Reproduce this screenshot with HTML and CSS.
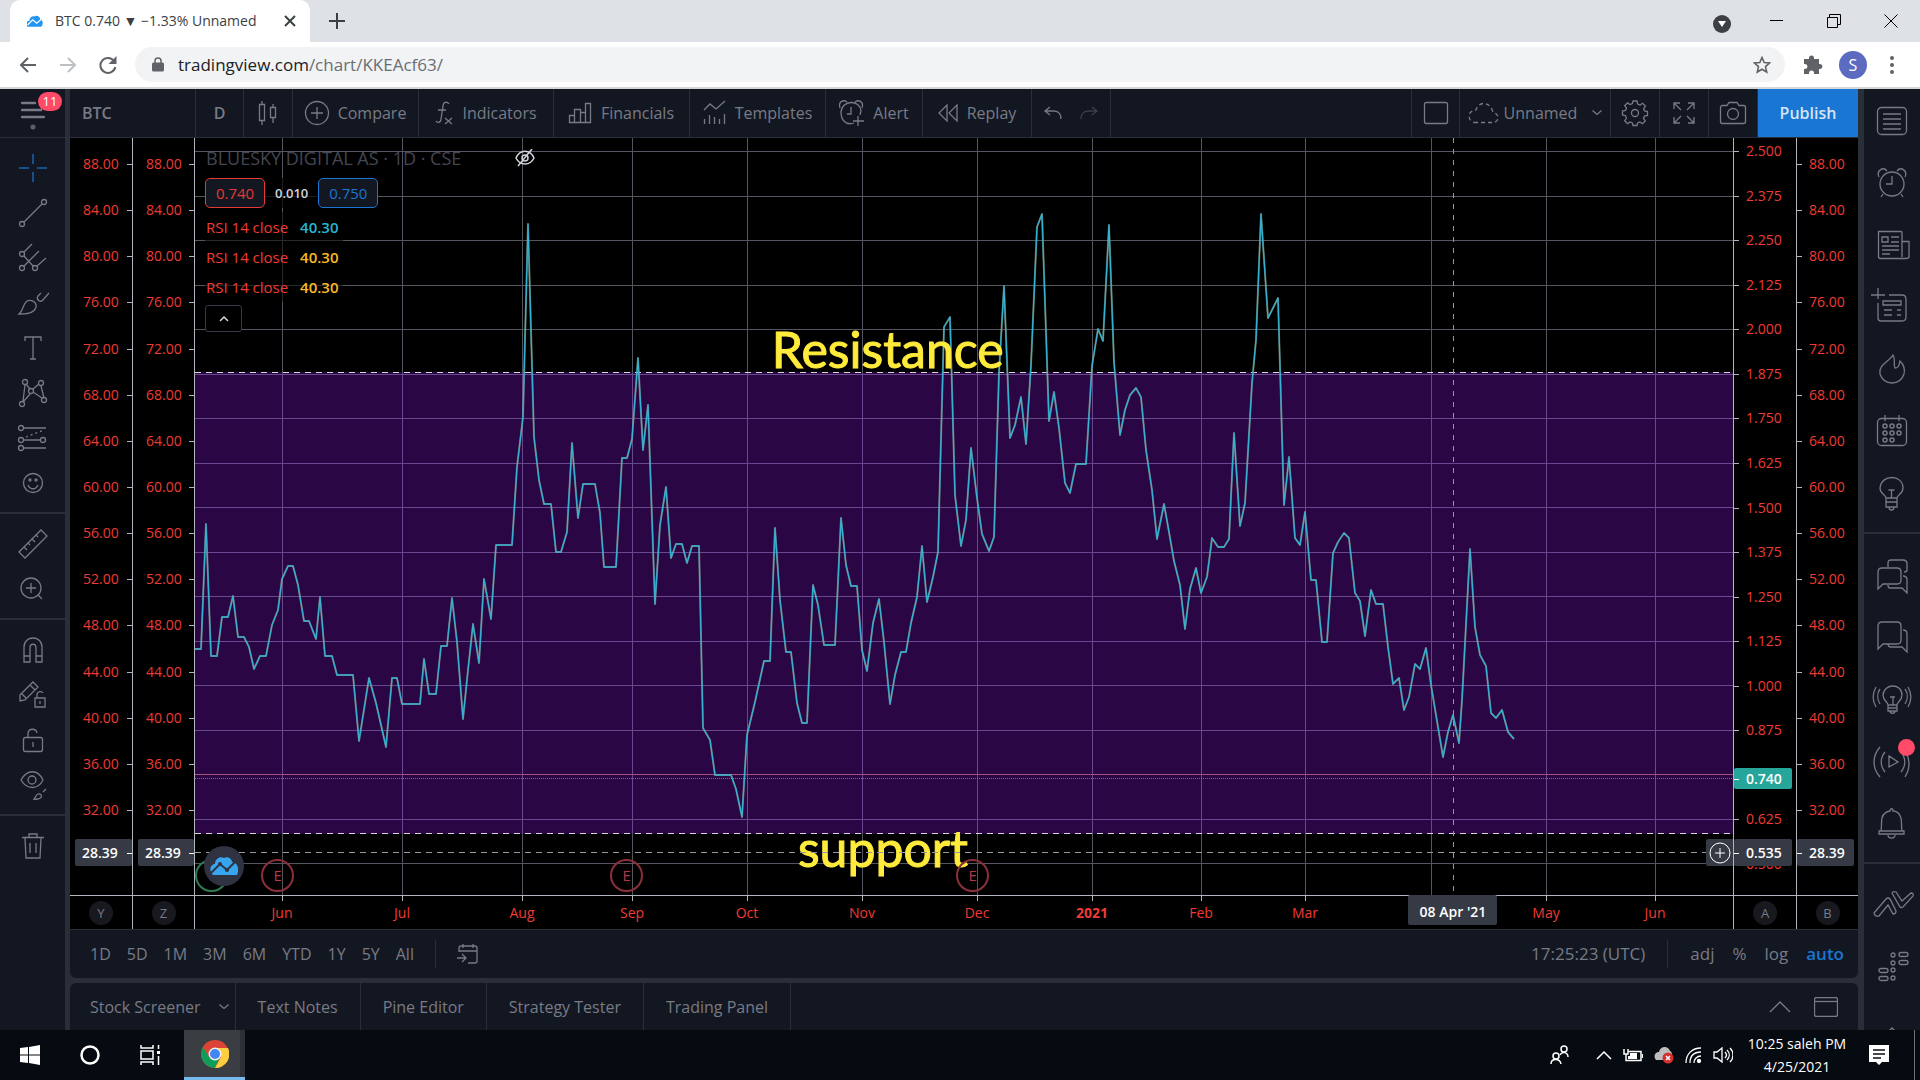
FILE: index.html
```html
<!DOCTYPE html>
<html lang="en">
<head>
<meta charset="utf-8">
<title>BTC 0.740 ▼ −1.33% Unnamed</title>
<link rel="stylesheet" href="styles.css">
</head>
<body>
<header class="browser">
  <div class="tabstrip">
    <div class="tab">
      <svg class="favicon" width="16" height="12" viewBox="0 0 28 20"><path fill="#2196f3" d="M2 20a5 5 0 0 1 2-10C4 4 9 1 13 2c3-3 10-1 10 5 5 1 6 9 2 13z"/><path fill="none" stroke="#fff" stroke-width="2" d="m1 17 9-9 7 6 8-7"/></svg>
      <span class="tab-title">BTC 0.740 ▼ −1.33% Unnamed</span>
      <button class="plain" aria-label="Close tab"><svg width="12" height="12" viewBox="0 0 12 12"><path d="m1 1 10 10M11 1 1 11" stroke="#3c4043" stroke-width="2"/></svg></button>
    </div>
    <button class="plain newtab" aria-label="New tab"><svg width="16" height="16" viewBox="0 0 16 16"><path d="M8 0v16M0 8h16" stroke="#3c4043" stroke-width="2"/></svg></button>
    <div class="window-controls">
      <button class="plain media" aria-label="Tab search"><svg width="18" height="18" viewBox="0 0 18 18"><circle cx="9" cy="9" r="9" fill="#3c4043"/><path d="M5 6h8l-4 6z" fill="#fff"/></svg></button>
      <button class="plain" aria-label="Minimize"><svg width="14" height="14" viewBox="0 0 14 14"><path d="M0 6.500h13" stroke="#000"/></svg></button>
      <button class="plain" aria-label="Restore"><svg width="14" height="14" viewBox="0 0 14 14"><path d="M.5 3.500h10v10H.5zM2.500 3V.5h11v10H11" fill="none" stroke="#000"/></svg></button>
      <button class="plain" aria-label="Close"><svg width="14" height="14" viewBox="0 0 14 14"><path d="m.5.5 13 13m0-13-13 13" stroke="#000"/></svg></button>
    </div>
  </div>
  <div class="navbar">
    <button class="plain nav" aria-label="Back"><svg width="18" height="16" viewBox="0 0 18 16"><path d="M17 8H2m7-7L2 8l7 7" fill="none" stroke="#5f6368" stroke-width="2"/></svg></button>
    <button class="plain nav" aria-label="Forward"><svg width="18" height="16" viewBox="0 0 18 16"><path d="M1 8h15M9 1l7 7-7 7" fill="none" stroke="#bdc1c6" stroke-width="2"/></svg></button>
    <button class="plain nav" aria-label="Reload"><svg width="18" height="18" viewBox="0 0 18 18"><path d="M15 5a7.500 7.500 0 1 0 1.300 6" fill="none" stroke="#5f6368" stroke-width="2"/><path d="M17.500 0v8h-8z" fill="#5f6368"/></svg></button>
    <div class="omnibox">
      <svg width="12" height="15" viewBox="0 0 12 15"><path d="M3 6V4a3 3 0 0 1 6 0v2" fill="none" stroke="#5f6368" stroke-width="1.500"/><rect y="5.500" width="12" height="9" rx="1.500" fill="#5f6368"/></svg>
      <span class="url"><b>tradingview.com</b>/chart/KKEAcf63/</span>
      <svg width="18" height="18" viewBox="0 0 18 18"><path d="m9 1.500 2.200 5 5.300.5-4 3.600 1.200 5.400L9 13.200 4.300 16l1.200-5.400-4-3.600 5.300-.5z" fill="none" stroke="#5f6368" stroke-width="1.600"/></svg>
    </div>
    <svg class="ext" width="19" height="19" viewBox="0 0 19 19"><path fill="#5f6368" d="M0 4h5V3a2.500 2.500 0 0 1 5 0v1h5v5h1a2.500 2.500 0 0 1 0 5h-1v5h-5v-1a2 2 0 0 0-5 0v1H0v-5h1a2.500 2.500 0 0 0 0-5H0z"/></svg>
    <span class="avatar">S</span>
    <svg class="kebab" width="4" height="18" viewBox="0 0 4 18" fill="#5f6368"><circle cx="2" cy="2" r="2"/><circle cx="2" cy="9" r="2"/><circle cx="2" cy="16" r="2"/></svg>
  </div>
</header>

<div class="app">
  <nav class="rail left">
    <button class="plain menu" aria-label="Menu"><svg width="24" height="34" viewBox="0 0 24 34"><path d="M1 5h13M1 12h19M1 19h22" stroke="#787b86" stroke-width="2.500" stroke-linecap="round"/><circle cx="12" cy="29" r="2.500" fill="#5d606b"/></svg><span class="count">11</span></button>
    <div class="group">
      <button class="plain" aria-label="Cross"><svg class="ic blue" viewBox="0 0 30 30"><path d="M15 1v10m0 8v10M1 15h10m8 0h10"/></svg></button>
      <button class="plain" aria-label="Trend line"><svg class="ic" viewBox="0 0 30 30"><circle cx="4" cy="26" r="2.500"/><circle cx="26" cy="4" r="2.500"/><path d="M6 24 24 6"/></svg></button>
      <button class="plain" aria-label="Pitchfork"><svg class="ic" viewBox="0 0 30 30"><circle cx="4" cy="11" r="2.500"/><circle cx="4" cy="25" r="2.500"/><circle cx="17" cy="25" r="2.500"/><path d="m6 9 8-8M6 13l9 10M6 23 21 8m-2 15 9-8"/></svg></button>
      <button class="plain" aria-label="Brush"><svg class="ic" viewBox="0 0 30 30"><path d="M1 26c5-4 3-9 8-13 4-2 10 1 9 6-2 7-11 7-17 7zM31 5l-7 8c-3 1-6-2-4-5l3-3"/></svg></button>
      <button class="plain" aria-label="Text"><svg class="ic" viewBox="0 0 30 30"><path d="M7 8V4h16v4M15 4v22m-3 0h6"/></svg></button>
      <button class="plain" aria-label="Patterns"><svg class="ic" viewBox="0 0 30 30"><circle cx="4" cy="26" r="2.500"/><circle cx="7" cy="4" r="2.500"/><circle cx="13" cy="13" r="2.500"/><circle cx="23" cy="5" r="2.500"/><circle cx="26" cy="22" r="2.500"/><path d="M5 23 7 7m1-1 4 5m3 0 6-5m2 2 3 12m-2 0-9-6m-3 2-7 8"/></svg></button>
      <button class="plain" aria-label="Forecast"><svg class="ic" viewBox="0 0 30 30"><circle cx="3" cy="5" r="2.500"/><circle cx="3" cy="17" r="2.500"/><circle cx="25" cy="17" r="2.500"/><circle cx="3" cy="25" r="2.500"/><path d="M6 5h22M6 17h16M6 25h22"/><path stroke-dasharray="2 3" d="M8 14 26 7"/></svg></button>
      <button class="plain" aria-label="Icons"><svg class="ic" viewBox="0 0 30 30"><circle cx="15" cy="15" r="9.500"/><path d="M10 17c2 5 8 5 10 0"/><circle cx="12" cy="12" r="1"/><circle cx="18" cy="12" r="1"/></svg></button>
    </div>
    <div class="group">
      <button class="plain" aria-label="Measure"><svg class="ic" viewBox="0 0 30 30"><path d="M1 23 23 1l6 6L7 29zM6 18l3 3m1-7 2 2m2-6 3 3m1-7 2 2"/></svg></button>
      <button class="plain" aria-label="Zoom in"><svg class="ic" viewBox="0 0 30 30"><circle cx="13" cy="14" r="10"/><path d="M13 9v10M8 14h10m2 7 4 4"/></svg></button>
    </div>
    <div class="group">
      <button class="plain" aria-label="Magnet"><svg class="ic" viewBox="0 0 30 30"><path d="M6 27V12c0-12 18-12 18 0v15h-6V13c0-5-6-5-6 0v14zm0-6h6m6 0h6"/></svg></button>
      <button class="plain" aria-label="Stay in drawing mode"><svg class="ic" viewBox="0 0 30 30"><path d="m2 15L15 2l5 5L7 20l-5 1zm10-10 5 5M4 14l4 4M17 18h10v9H17zm2 0v-4c1-3 5-3 6-1m-3 8v3"/></svg></button>
      <button class="plain" aria-label="Lock"><svg class="ic" viewBox="0 0 30 30"><rect x="5.500" y="12.500" width="19" height="14" rx="2"/><path d="M10 12V8c1-5 8-5 9 0M15 17v5"/></svg></button>
      <button class="plain" aria-label="Hide drawings"><svg class="ic" viewBox="0 0 30 30"><path d="M3 10C9-1 20-1 25 10 20 20 9 20 3 10zM16 29c2-2 2-6 6-5 4 3-1 6-6 5zm12-10-3 3"/><circle cx="14" cy="10" r="4"/></svg></button>
    </div>
    <div class="group last">
      <button class="plain" aria-label="Remove"><svg class="ic" viewBox="0 0 30 30"><path d="M4 6.500h22M7 7l1 20h14l1-20M11 6V3h8v3m-7 6v10m6-10v10"/></svg></button>
    </div>
  </nav>

  <main class="center">
    <div class="toolbar">
      <button class="tool w-symbol">BTC</button>
      <button class="tool w-day">D</button>
      <button class="tool w-icon" aria-label="Bar style"><svg width="20" height="26" viewBox="0 0 20 26"><path d="M1.500 4.500h5v16h-5zM4 1v3m0 17v4M12.500 7.500h5v10h-5zM15 4v3m0 11v5"/></svg></button>
      <button class="tool w-compare"><svg width="24" height="24" viewBox="0 0 24 24"><circle cx="12" cy="12" r="11.500"/><path d="M12 6v12M6 12h12"/></svg>Compare</button>
      <button class="tool w-wide"><svg width="18" height="24" viewBox="0 0 18 24"><path d="M14 3c-2-3-6-2-6 2L6 18c0 4-4 4-5 2M3 9h8m-1 8 7 6m0-6-7 6"/></svg>Indicators</button>
      <button class="tool w-wide"><svg width="23" height="24" viewBox="0 0 23 24"><path d="M.5 14.500h5v7h-5zm5-6h6v13h-6zm6 3h5v10h-5zm5-9h5v19h-5z"/></svg>Financials</button>
      <button class="tool w-wide"><svg width="23" height="24" viewBox="0 0 23 24"><path d="m1 9 6-6 6 5 9-8M1.500 18v5m5-9v9m5-7v7m5-5v5m5-10v10"/></svg>Templates</button>
      <button class="tool w-alert"><svg width="25" height="26" viewBox="0 0 25 26"><path d="M15 23C6 26 2 19 2 12c1-12 19-13 20-1l-1 4M12 7v7H8M1 8C-1 2 4-1 8 2M23 8c2-6-3-9-7-6m3 14v10m-5-5h11"/></svg>Alert</button>
      <button class="tool w-replay"><svg width="20" height="18" viewBox="0 0 20 18"><path d="M9 1v16L1 9zm10 0v16l-8-8z"/></svg>Replay</button>
      <div class="tool w-undo"><button class="plain" aria-label="Undo"><svg width="18" height="14" viewBox="0 0 18 14"><path d="M6 1 1 5l5 4M1 5h9c5 0 7 4 7 8"/></svg></button><button class="plain dim" aria-label="Redo"><svg width="18" height="14" viewBox="0 0 18 14"><path d="m12 1 5 4-5 4m5-4H8C3 5 1 9 1 13"/></svg></button></div>
      <div class="spacer"></div>
      <button class="tool w-icon" aria-label="Layout"><svg width="24" height="22" viewBox="0 0 24 22"><rect x=".5" y=".5" width="23" height="21" rx="2"/></svg></button>
      <button class="tool w-save"><svg width="31" height="22" viewBox="0 0 31 22"><path stroke-dasharray="4 3" d="M6 20.500h20c6-2 5-9-1-10C23 0 11-2 8 8-1 9-1 18 6 20.500z"/></svg>Unnamed<svg class="chev" width="10" height="6" viewBox="0 0 10 6"><path d="m.5.5 4.500 4 4.500-4"/></svg></button>
      <button class="tool w-icon" aria-label="Settings"><svg width="26" height="26" viewBox="0 0 26 26"><circle cx="13" cy="13" r="3.500"/><path d="M11 1h4l.6 3 2.400 1 2.600-1.700 2.800 2.800L21.600 8.700l1 2.300 2.900.5v4l-3 .6-1 2.300 1.800 2.500-2.900 2.800-2.500-1.700-2.300 1-.6 2.500h-4l-.6-2.600-2.300-1-2.500 1.800-2.900-2.900L4.500 18l-1-2.300L.5 15v-4l3-.5 1-2.300L2.700 5.700l2.900-2.800L8 4.600l2.400-1z"/></svg></button>
      <button class="tool w-icon" aria-label="Fullscreen"><svg width="22" height="22" viewBox="0 0 22 22"><path d="M1 7V1h6M1 1l7 7m7-7h6v6m0-6-7 7M1 15v6h6m-6 0 7-7m13 1v6h-6m6 0-7-7"/></svg></button>
      <button class="tool w-icon" aria-label="Snapshot"><svg width="26" height="22" viewBox="0 0 26 22"><path d="M2.500 3.500H7l2-3h8l2 3h4.500a2 2 0 0 1 2 2v14a2 2 0 0 1-2 2h-21a2 2 0 0 1-2-2v-14a2 2 0 0 1 2-2z"/><circle cx="13" cy="12" r="5.500"/></svg></button>
      <button class="publish">Publish</button>
    </div>

    <div class="chart">
      <div class="scale rsi lead">
        <ol><li>88.00</li><li>84.00</li><li>80.00</li><li>76.00</li><li>72.00</li><li>68.00</li><li>64.00</li><li>60.00</li><li>56.00</li><li>52.00</li><li>48.00</li><li>44.00</li><li>40.00</li><li>36.00</li><li>32.00</li></ol>
        <span class="cursor-tag">28.39</span>
      </div>
      <div class="scale rsi lead">
        <ol><li>88.00</li><li>84.00</li><li>80.00</li><li>76.00</li><li>72.00</li><li>68.00</li><li>64.00</li><li>60.00</li><li>56.00</li><li>52.00</li><li>48.00</li><li>44.00</li><li>40.00</li><li>36.00</li><li>32.00</li></ol>
        <span class="cursor-tag">28.39</span>
      </div>
      <div class="plot">
        <svg class="canvas" viewBox="195 138 1538 757" preserveAspectRatio="none">
          <defs>
            <path id="rsi" d="M195 649 201 649 206 524 211 656 217 656 222 617 228 617 233 596 238 637 244 637 249 647 254 669 260 656 266 656 272 625 278 610 282 579 288 566 293 566 298 585 304 621 309 621 316 639 320 597 325 656 332 656 337 675 353 675 359 741 369 678 376 703 386 747 392 678 397 678 402 704 420 704 424 659 429 694 436 694 441 646 447 646 452 598 457 642 463 719 468 670 473 624 479 663 484 579 491 619 496 545 512 545 517 467 523 417 528 224 534 437 539 480 544 504 551 504 556 552 561 552 567 532 572 443 578 518 583 484 595 484 600 513 604 567 616 567 622 458 627 458 632 439 638 358 643 450 648 405 655 604 660 525 666 487 671 558 676 544 682 544 687 563 692 546 699 546 703 728 710 740 715 775 731 775 736 789 742 817 747 735 755 702 764 661 770 661 775 528 780 600 786 652 791 652 797 703 802 723 807 723 813 585 818 605 824 645 835 645 841 518 846 565 851 586 857 586 862 650 867 671 873 623 879 599 884 642 890 704 895 675 901 652 906 652 911 623 917 597 922 546 927 602 933 577 938 552 944 327 950 317 955 495 961 546 966 520 971 448 977 498 982 534 989 551 994 537 999 373 1004 286 1010 438 1015 425 1021 397 1026 444 1031 365 1037 227 1042 214 1049 421 1054 392 1059 428 1065 483 1070 493 1076 464 1086 464 1092 366 1098 329 1103 341 1109 225 1114 362 1120 435 1125 410 1130 395 1136 388 1141 397 1146 450 1152 490 1157 539 1164 504 1169 532 1174 561 1180 585 1185 629 1190 589 1196 568 1201 593 1207 577 1212 538 1218 547 1224 547 1229 539 1234 433 1240 526 1245 503 1252 383 1256 340 1261 214 1268 318 1278 298 1284 505 1289 457 1295 538 1300 545 1305 512 1311 580 1316 580 1322 642 1327 642 1333 553 1338 542 1344 533 1349 538 1355 593 1360 601 1365 636 1371 590 1376 604 1383 604 1388 647 1393 684 1399 678 1404 710 1409 697 1415 664 1420 669 1426 648 1431 685 1438 727 1443 757 1448 732 1453 715 1459 743 1462 700 1470 549 1475 627 1480 655 1486 666 1491 713 1496 718 1502 710 1508 732 1514 739"/>
          </defs>
          <rect x="195" y="372" width="1538" height="462" fill="#2a0644"/>
          <path class="grid" d="M195 151.500H1733M195 196.500H1733M195 240.500H1733M195 285.500H1733M195 329.500H1733M195 863.500H1733"/>
          <path class="grid" d="M282.500 138V895M402.500 138V895M522.500 138V895M632.500 138V895M747.500 138V895M862.500 138V895M977.500 138V895M1092.500 138V895M1201.500 138V895M1305.500 138V895M1431.500 138V895M1546.500 138V895M1655.500 138V895"/>
          <path class="grid violet" d="M195 374.500H1733M195 418.500H1733M195 463.500H1733M195 507.500H1733M195 552.500H1733M195 596.500H1733M195 641.500H1733M195 685.500H1733M195 730.500H1733M195 819.500H1733"/>
          <path class="grid violet" d="M282.500 373V833M402.500 373V833M522.500 373V833M632.500 373V833M747.500 373V833M862.500 373V833M977.500 373V833M1092.500 373V833M1201.500 373V833M1305.500 373V833M1431.500 373V833M1546.500 373V833M1655.500 373V833"/>
          <path stroke="#9a4470" d="M195 774.500H1733"/><path stroke="#e0524f" stroke-dasharray="1 1" d="M195 774.500H1733"/>
          <path stroke="#2a7fe0" stroke-dasharray="1 1" d="M195 778.500H1733"/>
          <path stroke="#d8d8dc" stroke-dasharray="6 5" d="M195 372.500H1733M195 833.500H1733"/>
          <g fill="none" stroke-linejoin="round">
            <use href="#rsi" class="halo"/>
            <use href="#rsi" class="core"/>
          </g>
        </svg>
        <span class="note resistance">Resistance</span>
        <span class="note support">support</span>
        <svg class="canvas" viewBox="195 138 1538 757" preserveAspectRatio="none"><path stroke="#9598a1" stroke-dasharray="5 6" d="M1453.500 138V895"/><path stroke="#9598a1" stroke-dasharray="6 5" d="M195 852.500H1733"/></svg>
        <span class="event div"></span>
        <span class="event e1">E</span><span class="event e2">E</span><span class="event e3">E</span>
        <span class="tv-logo"><svg width="28" height="18" viewBox="0 0 28 18"><path fill="#37a6ef" d="M3 18C-2 13 1 7 5 7 5 1 11-1 14 1c4-2 8 1 8 4 7 1 7 9 5 13z"/><path fill="none" stroke="#2f3241" stroke-width="2" d="m1 16 9-9 7 6 8-8"/><circle cx="10" cy="7" r="2" fill="#2f3241"/><circle cx="17" cy="13" r="2" fill="#2f3241"/></svg></span>
        <div class="legend">
          <div class="title">BLUESKY DIGITAL AS · 1D · CSE <svg width="20" height="18" viewBox="0 0 20 18"><path d="M1 9c4-9 14-9 18 0-4 8-14 8-18 0zM17 0 3 17" fill="none" stroke="#d1d4dc" stroke-width="1.500"/><circle cx="10" cy="9" r="3" fill="none" stroke="#d1d4dc" stroke-width="1.500"/></svg></div>
          <div class="quotes"><button class="quote sell">0.740</button><span>0.010</span><button class="quote buy">0.750</button></div>
          <div class="study">RSI 14 close <b class="cyan">40.30</b></div>
          <div class="study">RSI 14 close <b>40.30</b></div>
          <div class="study">RSI 14 close <b>40.30</b></div>
          <button class="collapse" aria-label="Collapse legend"><svg width="10" height="6" viewBox="0 0 10 6"><path d="m1 5 4-4 4 4" fill="none" stroke="#d1d4dc" stroke-width="1.500"/></svg></button>
        </div>
        <span class="plus"><svg width="22" height="22" viewBox="0 0 22 22" fill="none" stroke="#fff"><circle cx="11" cy="11" r="10"/><path d="M11 6v10M6 11h10"/></svg></span>
      </div>
      <div class="scale trail price">
        <ol><li>2.500</li><li>2.375</li><li>2.250</li><li>2.125</li><li>2.000</li><li>1.875</li><li>1.750</li><li>1.625</li><li>1.500</li><li>1.375</li><li>1.250</li><li>1.125</li><li>1.000</li><li>0.875</li><li></li><li>0.625</li><li>0.500</li></ol>
        <span class="last-price">0.740</span>
        <span class="cursor-tag">0.535</span>
      </div>
      <div class="scale trail rsi">
        <ol><li>88.00</li><li>84.00</li><li>80.00</li><li>76.00</li><li>72.00</li><li>68.00</li><li>64.00</li><li>60.00</li><li>56.00</li><li>52.00</li><li>48.00</li><li>44.00</li><li>40.00</li><li>36.00</li><li>32.00</li></ol>
        <span class="cursor-tag">28.39</span>
      </div>
    </div>

    <div class="timeline">
      <div class="corner lead"><span>Y</span></div>
      <div class="corner lead"><span>Z</span></div>
      <div class="months">
        <ol><li>Jun</li><li>Jul</li><li>Aug</li><li>Sep</li><li>Oct</li><li>Nov</li><li>Dec</li><li class="year">2021</li><li>Feb</li><li>Mar</li><li>May</li><li>Jun</li></ol>
        <span class="date-tag">08 Apr '21</span>
      </div>
      <div class="corner trail"><span>A</span></div>
      <div class="corner trail"><span>B</span></div>
    </div>

    <div class="ranges">
      <button>1D</button><button>5D</button><button>1M</button><button>3M</button><button>6M</button><button>YTD</button><button>1Y</button><button>5Y</button><button>All</button>
      <i class="bar"></i>
      <button aria-label="Go to date"><svg width="21" height="20" viewBox="0 0 21 20"><path d="M2 8V4c0-2 1-2 2-2h14c2 0 2 1 2 2v13c0 2-1 2-2 2h-7M2 7h18M6 0v4m10-4v4M0 14h9m-4-4 4 4-4 4"/></svg></button>
      <div class="spacer"></div>
      <div class="settings">
        <button>17:25:23 (UTC)</button>
        <i class="bar"></i>
        <button>adj</button><button>%</button><button>log</button><button class="on">auto</button>
      </div>
    </div>

    <div class="panels">
      <button class="panel-first">Stock Screener<svg width="10" height="6" viewBox="0 0 10 6"><path d="m.5.5 4.500 4 4.500-4"/></svg></button><button>Text Notes</button><button>Pine Editor</button><button>Strategy Tester</button><button>Trading Panel</button>
      <div class="spacer"></div>
      <button class="plain" aria-label="Open panel"><svg width="22" height="12" viewBox="0 0 22 12"><path d="M1 11 11 1l10 10"/></svg></button>
      <button class="plain" aria-label="Maximize panel"><svg width="24" height="20" viewBox="0 0 24 20"><rect x=".5" y=".5" width="23" height="19" rx="2"/><path d="M1 4.500h22"/></svg></button>
    </div>
  </main>

  <aside class="rail right">
    <div class="group">
      <button class="plain" aria-label="Watchlist"><svg class="ic" viewBox="0 0 30 30"><rect x=".5" y="1.500" width="29" height="27" rx="4"/><path d="M6 8h18M6 13h18M6 18h18M6 23h18"/></svg></button>
      <button class="plain" aria-label="Alerts"><svg class="ic" viewBox="0 0 30 30"><circle cx="15" cy="16" r="12"/><path d="M15 8v8H9M2 9C-1 3 6-2 10 3M28 9c3-6-4-11-8-6M6 26l-2 3m20-3 2 3"/></svg></button>
      <button class="plain" aria-label="News"><svg class="ic" viewBox="0 0 30 30"><path d="M25 27V2.500a1 1 0 0 0-1-1H1.500v25a2 2 0 0 0 2 2H29c2 0 3-1 3-2v-15h-7M5 7h6v5H5zm9 0h8m-8 5h8M5 16h17M5 20h17M5 24h8"/></svg></button>
      <button class="plain" aria-label="Data window"><svg class="ic" viewBox="0 0 30 30"><path d="M1 11v15q0 3 3 3h21q4 0 4-4V7q0-4-4-4H12M1-4v11M-6 3H8M6 9h18v4H6zm1 9h8m5 0h4M7 23h8m5 0h4"/></svg></button>
      <button class="plain" aria-label="Hotlists"><svg class="ic" viewBox="0 0 30 30"><path d="M16 1c3 5 0 9 2 13 4 0 4-3 5-7 4 4 5 9 4 13-4 12-20 12-24 0C1 11 12 8 16 1z"/></svg></button>
      <button class="plain" aria-label="Calendar"><svg class="ic" viewBox="0 0 30 30"><rect x=".5" y="2.500" width="29" height="27" rx="4"/><path d="M8-1v6M22-1v6"/><g stroke-width="1.500"><circle cx="8" cy="10" r="2"/><circle cx="15" cy="10" r="2"/><circle cx="22" cy="10" r="2"/><circle cx="8" cy="17" r="2"/><circle cx="15" cy="17" r="2"/><circle cx="22" cy="17" r="2"/><circle cx="8" cy="24" r="2"/><circle cx="15" cy="24" r="2"/></g></svg></button>
      <button class="plain" aria-label="Ideas"><svg class="ic" viewBox="0 0 30 30"><path d="M9 20c0-3-6-4-6-10C4-4 26-4 26 10c0 6-6 7-6 10zm0 0v9h11v-9M9 24h11m-8 5c0 4 5 4 5 0M14.500 20v-8m-3 0h6"/></svg></button>
    </div>
    <div class="group">
      <button class="plain" aria-label="Public chats"><svg class="ic" viewBox="0 0 30 30"><path d="M1 29V12q0-4 4-4h15q4 0 4 4v8q0 4-4 4H6zM11 7V3q0-3 3-3h12q4 0 4 4v6q0 2-3 2m-1 4q4 0 4 4v13l-5-5H13q-2 0-2-3"/></svg></button>
      <button class="plain" aria-label="Private chats"><svg class="ic" viewBox="0 0 30 30"><path d="M1 27V4q0-4 4-4h15q4 0 4 4v14q0 4-4 4H6zM26 8q4 0 4 4v18l-5-5H14q-3 0-3-3"/></svg></button>
      <button class="plain" aria-label="Ideas stream"><svg class="ic" viewBox="0 0 30 30"><path d="M11 21c0-3-5-4-5-10 1-12 19-12 19 0 0 6-5 7-5 10zm0 0v6h9v-6m-9 3h9m-7 3c0 3 5 3 5 0m-2-6v-8m-3 0h5M3 5C0 9 0 15 3 20M28 5c3 4 3 10 0 15M-1 3c-4 7-4 13 0 20M31 3c4 7 4 13 0 20"/></svg></button>
      <button class="plain live" aria-label="Streams"><svg class="ic" viewBox="0 0 30 30"><path d="M12 10v11l9-5zM8 6c-5 6-5 14 0 20M24 6c5 6 5 14 0 20M3 1c-8 9-8 21 0 30M29 6c4 8 4 17-1 25"/></svg></button>
      <button class="plain" aria-label="Notifications"><svg class="ic" viewBox="0 0 30 30"><path d="M2 23h25v3H2zm2 0c1-5 0-10 1-13 1-5 6-7 8-7 0-3 3-3 3 0 3 0 7 2 8 7 1 4 0 8 1 13M11 27c0 4 7 4 7 0"/></svg></button>
    </div>
    <div class="group last">
      <button class="plain" aria-label="Order panel"><svg class="ic" viewBox="0 0 30 30"><path d="M-3 23 9 9q2-2 4 0l6 12q0 3-3 3l-5-9-9 11q-4 1-5-3zM15 3q1-2 4-1l6 9 9-8q3 0 2 3L26 17q-2 1-3 0z"/></svg></button>
      <button class="plain" aria-label="Depth of market"><svg class="ic" viewBox="0 0 30 30" stroke-width="1.500"><circle cx="16" cy="3" r="2"/><circle cx="16" cy="11" r="2"/><rect x="22" y=".5" width="9" height="4" rx="2"/><rect x="22" y="8.500" width="9" height="4" rx="2"/><circle cx="16" cy="18" r="2"/><circle cx="16" cy="26" r="2"/><rect x="2" y="16.500" width="9" height="4" rx="2"/><rect x="2" y="24.500" width="9" height="4" rx="2"/></svg></button>
      <button class="plain" aria-label="Help"><svg class="ic" viewBox="0 0 30 30"><path d="m11 18 4-4 4 4"/></svg></button>
    </div>
  </aside>
</div>

<footer class="taskbar">
  <button class="plain task" aria-label="Start"><svg width="20" height="20" viewBox="0 0 20 20" fill="#fff"><path d="m0 3 8-1v7.500H0zm9-1 11-2v9.500H9zM0 10.500h8V18l-8-1zm9 0h11V20L9 18z"/></svg></button>
  <button class="plain task" aria-label="Search"><svg width="20" height="20" viewBox="0 0 20 20"><circle cx="10" cy="10" r="8.500" fill="none" stroke="#fff" stroke-width="2.500"/></svg></button>
  <button class="plain task" aria-label="Task view"><svg width="20" height="20" viewBox="0 0 20 20" fill="none" stroke="#fff" stroke-width="1.500"><path d="M1 0v3h12V0M1 6h12v8H1zM1 20v-3h12v3M18.500 0v4m0 7v9"/><path d="M18.500 6v3" stroke-width="3"/></svg></button>
  <button class="plain chrome" aria-label="Chrome"><svg width="28" height="28" viewBox="0 0 28 28"><circle cx="14" cy="14" r="14" fill="#db4437"/><path d="M2 7a14 14 0 0 0 12 21l5-11H8z" fill="#0f9d58"/><path d="M14 28A14 14 0 0 0 27 8H14l6 9z" fill="#ffcd40"/><circle cx="14" cy="14" r="6.500" fill="#f1f1f1"/><circle cx="14" cy="14" r="5" fill="#4285f4"/></svg></button>
  <div class="spacer"></div>
  <div class="tray">
    <svg class="people" width="19" height="20" viewBox="0 0 19 20" fill="none" stroke="#fff" stroke-width="1.500"><circle cx="14" cy="4" r="3"/><circle cx="6" cy="11" r="3"/><path d="M1 19c0-6 9-6 10 0M10 10c2-4 8-3 8 2"/></svg>
    <svg width="16" height="9" viewBox="0 0 16 9"><path d="m1 8 7-7 7 7" fill="none" stroke="#fff" stroke-width="1.500"/></svg>
    <svg width="20" height="14" viewBox="0 0 20 14"><path d="M5 3.500h13v9H3V8M1 1v5h4V1M3 6v3" fill="none" stroke="#fff" stroke-width="1.500"/><path d="M7 5h7v6H5V8h2zM19 6h1v4h-1z" fill="#fff"/></svg>
    <svg width="20" height="18" viewBox="0 0 20 18"><path fill="#bdbdbd" d="M2 14C-1 10 1 6 5 6c1-6 9-7 11-1 3 1 2 6 1 9z"/><circle cx="14" cy="12" r="5.500" fill="#d32f2f"/><path d="m12 10 4 4m0-4-4 4" stroke="#fff" stroke-width="1.500"/></svg>
    <svg width="17" height="17" viewBox="0 0 17 17" fill="none" stroke="#fff" stroke-width="1.300"><path d="M1 16C1 7 7 1 16 1M5 16c0-7 4-11 11-11M9 16c0-4 3-7 7-7"/><circle cx="14" cy="14" r="1.500" fill="#fff"/></svg>
    <svg width="20" height="16" viewBox="0 0 20 16" fill="none" stroke="#fff" stroke-width="1.300"><path d="M1 5h3l5-4v14l-5-4H1zM12 5c2 2 2 4 0 6m2-8c3 3 3 7 0 10m3-12c4 4 4 10 0 14"/></svg>
  </div>
  <div class="clock"><span>10:25 saleh PM</span><span>4/25/2021</span></div>
  <svg class="center-icon" width="20" height="20" viewBox="0 0 20 20"><path fill="#fff" d="M0 0h20v17h-7l-3 3-3-3H0z"/><path d="M4 5h12M4 9h12M4 13h8" stroke="#0a0e14" stroke-width="1.300"/></svg>
</footer>
</body>
</html>
```
FILE: styles.css
```css
* { box-sizing: border-box; }
body { margin: 0; height: 100vh; display: flex; flex-direction: column; overflow: hidden; background: #2a2e39; color: #787b86; font: 16px/20px "Open Sans", "Noto Sans", sans-serif; }
button { font: inherit; color: inherit; cursor: pointer; background: none; border: 0; padding: 0; }
ol { list-style: none; margin: 0; padding: 0; }
svg { flex: none; display: block; }
.plain { display: flex; align-items: center; justify-content: center; }
.spacer { flex: 1; }

/* browser frame */
.browser { flex: none; background: #fff; border-bottom: 2px solid #d5d7db; color: #3c4043; }
.tabstrip { height: 42px; background: #dee1e6; display: flex; align-items: center; padding-left: 10px; }
.tab { width: 300px; height: 42px; background: #fff; border-radius: 10px 10px 0 0; display: flex; align-items: center; padding: 0 14px 0 17px; }
.tab-title { flex: 1; font-size: 14px; margin-left: 12px; white-space: nowrap; }
.newtab { margin-left: 19px; }
.window-controls { margin-left: auto; display: flex; align-items: center; padding-right: 22px; gap: 43px; height: 36px; }
.window-controls .media { margin-top: 6px; margin-right: -4px; }
.navbar { height: 45px; display: flex; align-items: center; padding-right: 26px; }
.nav { width: 40px; height: 40px; }
.nav:first-child { margin-left: 8px; }
.omnibox { flex: 1; height: 35px; margin-left: 7px; border-radius: 18px; background: #f1f3f4; display: flex; align-items: center; padding: 0 14px 0 17px; }
.url { flex: 1; margin-left: 14px; font-size: 17px; color: #6a6e73; }
.url b { font-weight: 400; color: #202124; }
.ext { margin-left: 19px; }
.avatar { margin-left: 16px; width: 28px; height: 28px; border-radius: 50%; background: #5c6bc0; color: #fff; text-align: center; line-height: 28px; }
.kebab { margin-left: 23px; }

/* application */
.app { flex: 1; min-height: 0; display: flex; overflow: hidden; }
.rail { flex: none; background: #131722; }
.rail.left { width: 65px; margin-right: 5px; }
.rail.right { width: 56px; margin-left: 6px; }
.rail .plain { width: 100%; }
.group { border-bottom: 2px solid #2a2e39; }
.left .group { padding: 7px 0; }
.left .group .plain { height: 45px; }
.left .last, .right .last { border-bottom: 0; }
.menu { position: relative; height: 49px; border-bottom: 1px solid #2a2e39; padding-top: 3px; }
.count { position: absolute; left: 38px; top: 3px; width: 24px; height: 19px; border-radius: 10px; background: #ff4a68; color: #fff; font-size: 13px; line-height: 19px; }
.right .group { padding: 10px 0 8px; }
.right .group:first-child { padding-top: 1px; }
.right .group .plain { height: 62px; }
.ic { width: 30px; height: 30px; fill: none; stroke: #787b86; stroke-width: 1.300px; overflow: visible; }
.ic.blue { stroke: #1565b0; stroke-width: 1.500px; }
.live { position: relative; }
.live::after { content: ""; position: absolute; right: 5px; top: 9px; width: 17px; height: 17px; border-radius: 50%; background: #ff4a68; }

.center { flex: 1; min-width: 0; display: flex; flex-direction: column; }
.toolbar { flex: none; height: 49px; display: flex; background: #131722; border-bottom: 1px solid #2a2e39; }
.tool { flex: none; display: flex; align-items: center; justify-content: center; gap: 9px; border-right: 1px solid #2a2e39; }
.toolbar svg { fill: none; stroke: #787b86; stroke-width: 1.300px; overflow: visible; }
.w-symbol { width: 126px; justify-content: flex-start; padding-left: 12px; font-weight: 600; }
.w-day { width: 48px; font-weight: 600; }
.w-icon { width: 49px; }
.w-compare { width: 126px; }
.w-wide { width: 135px; }
.w-wide + .w-wide { width: 136px; }
.w-alert { width: 97px; }
.w-replay { width: 109px; }
.w-undo { width: 79px; gap: 18px; }
.w-save { width: 151px; gap: 5px; }
.w-save .chev { margin-left: 10px; }
.spacer + .tool { border-left: 1px solid #2a2e39; }
.dim { opacity: .4; }
.publish { width: 100px; background: #1976d2; color: #d6e4f4; font-weight: 600; }

/* chart */
.chart { flex: 1; min-height: 0; display: flex; background: #000; }
.scale { position: relative; flex: none; overflow: hidden; display: flex; flex-direction: column; font-size: 14px; color: #ef3b33; }
.scale.lead, .corner.lead { width: 62px; border-right: 1px solid #b2b5be; }
.scale.lead:first-child, .corner.lead:first-child { width: 63px; }
.scale.trail, .corner.trail { width: 62px; border-left: 1px solid #b2b5be; }
.scale.price, .months + .corner { width: 63px; }
.scale ol { flex: 1; display: flex; flex-direction: column; }
.scale li { flex: 1; display: flex; align-items: center; position: relative; }
.rsi ol { padding: 3px 0 62px; }
.price ol { margin-top: -9px; padding-bottom: 9px; }
.lead li { padding-left: 13px; }
.trail li { padding-left: 12px; }
.scale li::after { content: ""; position: absolute; top: 50%; width: 5px; height: 1px; background: #b2b5be; }
.lead li::after { right: 0; }
.trail li::after { left: 0; }
.cursor-tag, .last-price { position: absolute; bottom: 29px; height: 27px; line-height: 27px; color: #fff; background: #363a45; border-radius: 2px; font-weight: 600; }
.lead .cursor-tag { left: 5px; right: 0; padding-left: 7px; }
.trail .cursor-tag, .last-price { left: 0; right: 4px; padding-left: 12px; }
.cursor-tag::after, .last-price::after { content: ""; position: absolute; top: 50%; width: 5px; height: 1px; background: #fff; }
.lead .cursor-tag::after { right: 0; }
.trail .cursor-tag::after, .last-price::after { left: 0; }
.last-price { bottom: 106px; height: 21px; line-height: 21px; background: #26a69a; }

.plot { position: relative; flex: 1; min-width: 0; }
.canvas { position: absolute; inset: 0; width: 100%; height: 100%; }
.grid { stroke: #54565f; fill: none; }
.violet { stroke: #68488f; }
.halo { stroke: #9a9a78; stroke-width: 2px; stroke-opacity: .6; }
.core { stroke: #2fbbe0; stroke-width: 1.300px; stroke-opacity: .9; }
.note { position: absolute; color: #ffeb3b; font-family: Lato, "Open Sans", sans-serif; font-size: 50px; line-height: 60px; -webkit-text-stroke: 1px #ffeb3b; }
.resistance { left: 37.500%; bottom: 68.100%; }
.support { left: 39.200%; bottom: 2.200%; }
.event { position: absolute; bottom: 3px; width: 33px; height: 33px; margin-left: -17px; border: 2px solid #8c2f3b; border-radius: 50%; color: #b5384a; text-align: center; font-size: 15px; line-height: 28px; }
.event.div { left: 1.100%; border-color: #2f7a52; }
.e1 { left: 5.400%; }
.e2 { left: 28.100%; }
.e3 { left: 50.600%; }
.tv-logo { position: absolute; left: 9px; bottom: 9px; width: 40px; height: 40px; border-radius: 50%; background: #2f3241; display: flex; align-items: center; justify-content: center; }
.plus { position: absolute; right: 0; bottom: 29px; width: 27px; height: 27px; background: #363a45; border-radius: 2px 0 0 2px; display: flex; align-items: center; justify-content: center; }
.legend { position: absolute; left: 10px; top: 5px; display: flex; flex-direction: column; align-items: flex-start; font-size: 15px; }
.title { display: flex; align-items: center; height: 30px; padding-left: 1px; font-size: 18px; color: #434651; white-space: nowrap; }
.title svg { margin-left: 54px; }
.quotes { display: flex; align-items: center; gap: 10px; height: 30px; margin: 5px 0 4px; color: #d1d4dc; font-size: 13px; font-weight: 600; background: #000a; }
.quote { width: 60px; height: 30px; border: 1px solid; border-radius: 5px; background: #131722; font-size: 15px; font-weight: 400; }
.sell { color: #e53935; }
.buy { color: #1976d2; }
.study { height: 30px; line-height: 30px; padding: 0 4px 0 1px; color: #ef3b33; background: #0008; }
.study b { font-weight: 600; margin-left: 8px; color: #f7b924; }
.study .cyan { color: #26b6d0; }
.collapse { width: 37px; height: 27px; margin-top: 3px; border: 1px solid #363a45; border-radius: 3px; background: #000; display: flex; align-items: center; justify-content: center; }

.timeline { flex: none; height: 34px; display: flex; background: #000; border-top: 1px solid #b2b5be; font-size: 14px; }
.corner { flex: none; display: flex; align-items: center; justify-content: center; font-size: 13px; }
.corner span { width: 24px; height: 24px; border-radius: 50%; background: #17191f; line-height: 24px; text-align: center; }
.months { position: relative; flex: 1; min-width: 0; color: #ef3b33; }
.months ol { display: grid; grid-template-columns: 120fr 120fr 110fr 115fr 115fr 115fr 115fr 109fr 104fr 241fr 109fr 78fr; padding-left: 87px; }
.months li { position: relative; width: 0; height: 33px; display: flex; align-items: center; justify-content: center; white-space: nowrap; }
.months li::before { content: ""; position: absolute; top: 0; left: 0; width: 1px; height: 5px; background: #b2b5be; }
.year { font-weight: 700; }
.date-tag { position: absolute; left: 78.900%; top: -1px; width: 89px; height: 30px; line-height: 34px; text-align: center; background: #363a45; border-radius: 2px; color: #fff; font-weight: 600; }

.ranges { flex: none; height: 49px; margin-bottom: 5px; padding: 0 5px 0 12px; display: flex; align-items: center; background: #131722; border-top: 1px solid #2a2e39; border-radius: 0 0 6px 6px; }
.ranges button { padding: 0 8px; }
.settings { display: flex; align-items: center; font-size: 17px; }
.ranges .settings button { padding: 0 9px; }
.ranges .on { color: #1976d2; font-weight: 600; }
.bar { width: 1px; height: 28px; margin: 0 13px; background: #2a2e39; }
.ranges svg, .panels svg { fill: none; stroke: #787b86; stroke-width: 1.300px; }
.panels { flex: none; height: 47px; display: flex; background: #131722; border-radius: 6px 6px 0 0; padding-right: 20px; }
.panels button:not(.plain) { padding: 0 22px; border-right: 1px solid #2a2e39; }
.panels .panel-first { display: flex; align-items: center; gap: 18px; padding: 0 6px 0 20px !important; }
.panels .plain { margin-left: 23px; }

/* desktop taskbar */
.taskbar { flex: none; height: 50px; display: flex; align-items: center; background: #060a11; color: #fff; font-size: 14px; }
.task { width: 60px; height: 50px; }
.chrome { width: 61px; height: 50px; margin-left: 4px; background: linear-gradient(90deg, #3a3d41 56px, #2d3034 56px); border-bottom: 3px solid #76b9ed; }
.tray { display: flex; align-items: center; gap: 11px; }
.people { margin-right: 16px; }
.clock { width: 128px; display: flex; flex-direction: column; align-items: center; line-height: 23px; }
.center-icon { margin: 0 25px 0 8px; }
.taskbar::after { content: ""; width: 5px; height: 50px; border-left: 1px solid #6c7077; }
```
